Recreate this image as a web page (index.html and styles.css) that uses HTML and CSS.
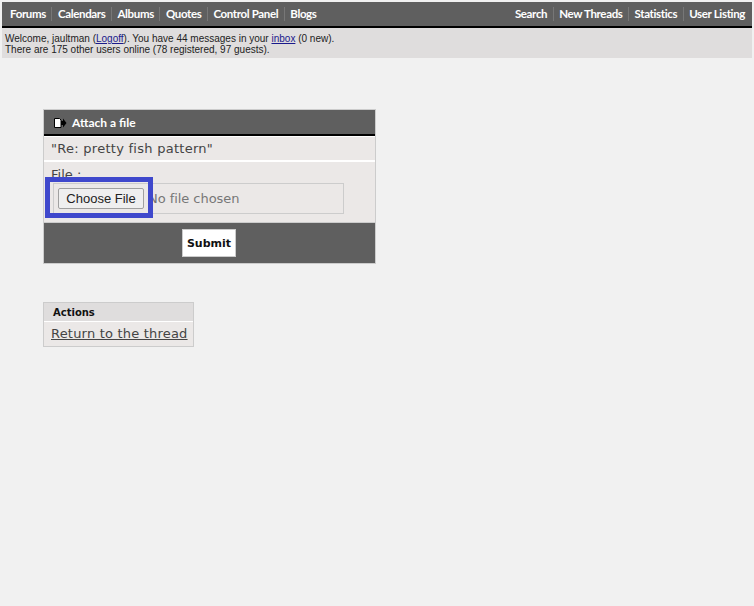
FILE: index.html
```html
<!DOCTYPE html>
<html lang="en">
<head>
<meta charset="utf-8">
<title>Attach a file</title>
<link rel="stylesheet" href="styles.css">
</head>
<body>
<nav class="nav">
  <ul class="nav-list">
    <li><a href="#">Forums</a></li>
    <li><a href="#">Calendars</a></li>
    <li><a href="#">Albums</a></li>
    <li><a href="#">Quotes</a></li>
    <li><a href="#">Control Panel</a></li>
    <li><a href="#">Blogs</a></li>
  </ul>
  <ul class="nav-list">
    <li><a href="#">Search</a></li>
    <li><a href="#">New Threads</a></li>
    <li><a href="#">Statistics</a></li>
    <li><a href="#">User Listing</a></li>
  </ul>
</nav>
<div class="info">
  <div>Welcome, jaultman (<a href="#">Logoff</a>). You have 44 messages in your <a href="#">inbox</a> (0 new).</div>
  <div>There are 175 other users online (78 registered, 97 guests).</div>
</div>
<main class="content">
  <form class="panel">
    <h1 class="panel-head">
      <svg class="panel-icon" width="14" height="10" viewBox="0 0 14 10"><path d="M1.500 .5h5l1.500 1.500v7.500h-6.500z" fill="#fff" stroke="#000"/><path d="M8 3h2v-2.500l3.500 4.500-3.500 4.500v-2.500h-2z" fill="#000"/></svg>
      Attach a file
    </h1>
    <div class="panel-title">"Re: pretty fish pattern"</div>
    <div class="panel-body">
      <label class="file-label" for="file">File :</label>
      <div class="file-box"><input class="file-input" id="file" type="file"></div>
      <div class="highlight"></div>
    </div>
    <div class="panel-foot"><button class="submit" type="button">Submit</button></div>
  </form>
  <section class="actions">
    <h2 class="actions-head">Actions</h2>
    <div class="actions-body"><a href="#">Return to the thread</a></div>
  </section>
</main>
</body>
</html>
```
FILE: styles.css
```css
html, body { margin: 0; padding: 0; height: 100%; }
body {
  background: #f1f1f1;
  padding: 2px 2px 0;
  box-sizing: border-box;
  font-family: "DejaVu Sans", sans-serif;
  overflow: hidden;
}
a { color: inherit; }
.nav {
  height: 24px;
  background: #5f5f5f;
  border-bottom: 2px solid #000;
  display: flex;
  justify-content: space-between;
  align-items: center;
  padding: 0 1.500px 0 2.500px;
}
.nav-list { display: flex; list-style: none; margin: 0; padding: 0; }
.nav-list li {
  padding: 0 5.500px;
  border-left: 1px solid #777;
  font: 700 11.500px/14px "Lato", sans-serif;
  letter-spacing: -.35px;
  color: #fff;
}
.nav-list li:first-child { border-left: 0; }
.nav-list a { color: #fff; text-decoration: none; }
.info {
  height: 30px;
  background: #dfdddd;
  padding: 5px 3px 0;
  box-sizing: border-box;
  font: 10px/11px "Liberation Sans", sans-serif;
  color: #222;
}
.info a { color: #1a1a8c; }
.content { padding: 51px 0 0 41px; }
.panel {
  width: 333px;
  box-sizing: border-box;
  border: 1px solid #ccc;
  background: #ebe8e7;
}
.panel-head {
  margin: 0;
  height: 26px;
  box-sizing: border-box;
  background: #5f5f5f;
  border-bottom: 2px solid #000;
  display: flex;
  align-items: center;
  gap: 5px;
  padding: 1px 0 0 9px;
  font: 700 12px/14px "Lato", sans-serif;
  color: #fff;
}
.panel-icon { flex: none; }
.panel-title {
  height: 26px;
  box-sizing: border-box;
  border-top: 1px solid #fff;
  border-bottom: 2px solid #fff;
  padding: 4px 0 0 7px;
  font-size: 13px;
  line-height: 16px;
  letter-spacing: .27px;
  color: #444;
}
.panel-body {
  position: relative;
  height: 61px;
  box-sizing: border-box;
  padding: 5px 0 0 7px;
  border-bottom: 1px solid #ccc;
}
.file-label { display: block; font-size: 13px; line-height: 16px; color: #444; }
.file-box {
  width: 291px;
  height: 31px;
  margin: 0 0 0 2px;
  box-sizing: border-box;
  border: 1px solid #ccc;
  padding: 4px;
}
.file-input {
  display: block;
  width: 280px;
  font: 13px/21px "DejaVu Sans", sans-serif;
  letter-spacing: -.05px;
  color: #777;
}
.file-input::file-selector-button {
  width: 86px;
  height: 21px;
  margin-right: 4px;
  padding: 0;
  background: #efefef;
  border: 1px solid #a0a0a0;
  border-radius: 2px;
  color: #222;
  font: 13px "Liberation Sans", sans-serif;
  letter-spacing: 0;
}
.highlight {
  position: absolute;
  left: 1px;
  top: 15px;
  width: 108px;
  height: 41px;
  box-sizing: border-box;
  border: 5px solid #3f48cc;
}
.panel-foot {
  height: 40px;
  box-sizing: border-box;
  background: #5f5f5f;
  display: flex;
  align-items: center;
  padding-left: 138px;
}
.submit {
  width: 54px;
  height: 28px;
  padding: 0;
  background: #fff;
  border: 1px solid #ccc;
  border-radius: 0;
  font: 700 11px "DejaVu Sans", sans-serif;
  color: #111;
}
.actions {
  width: 151px;
  margin-top: 38px;
  box-sizing: border-box;
  border: 1px solid #ccc;
  background: #ebe8e7;
}
.actions-head {
  margin: 0;
  height: 19px;
  box-sizing: border-box;
  background: #dfdddd;
  border-bottom: 1px solid #fff;
  padding-left: 9px;
  font: 700 10px/20px "DejaVu Sans", sans-serif;
  color: #111;
}
.actions-body {
  height: 24px;
  box-sizing: border-box;
  padding: 3px 0 0 7px;
  font-size: 13px;
  line-height: 17px;
  letter-spacing: .2px;
  color: #444;
}
```
